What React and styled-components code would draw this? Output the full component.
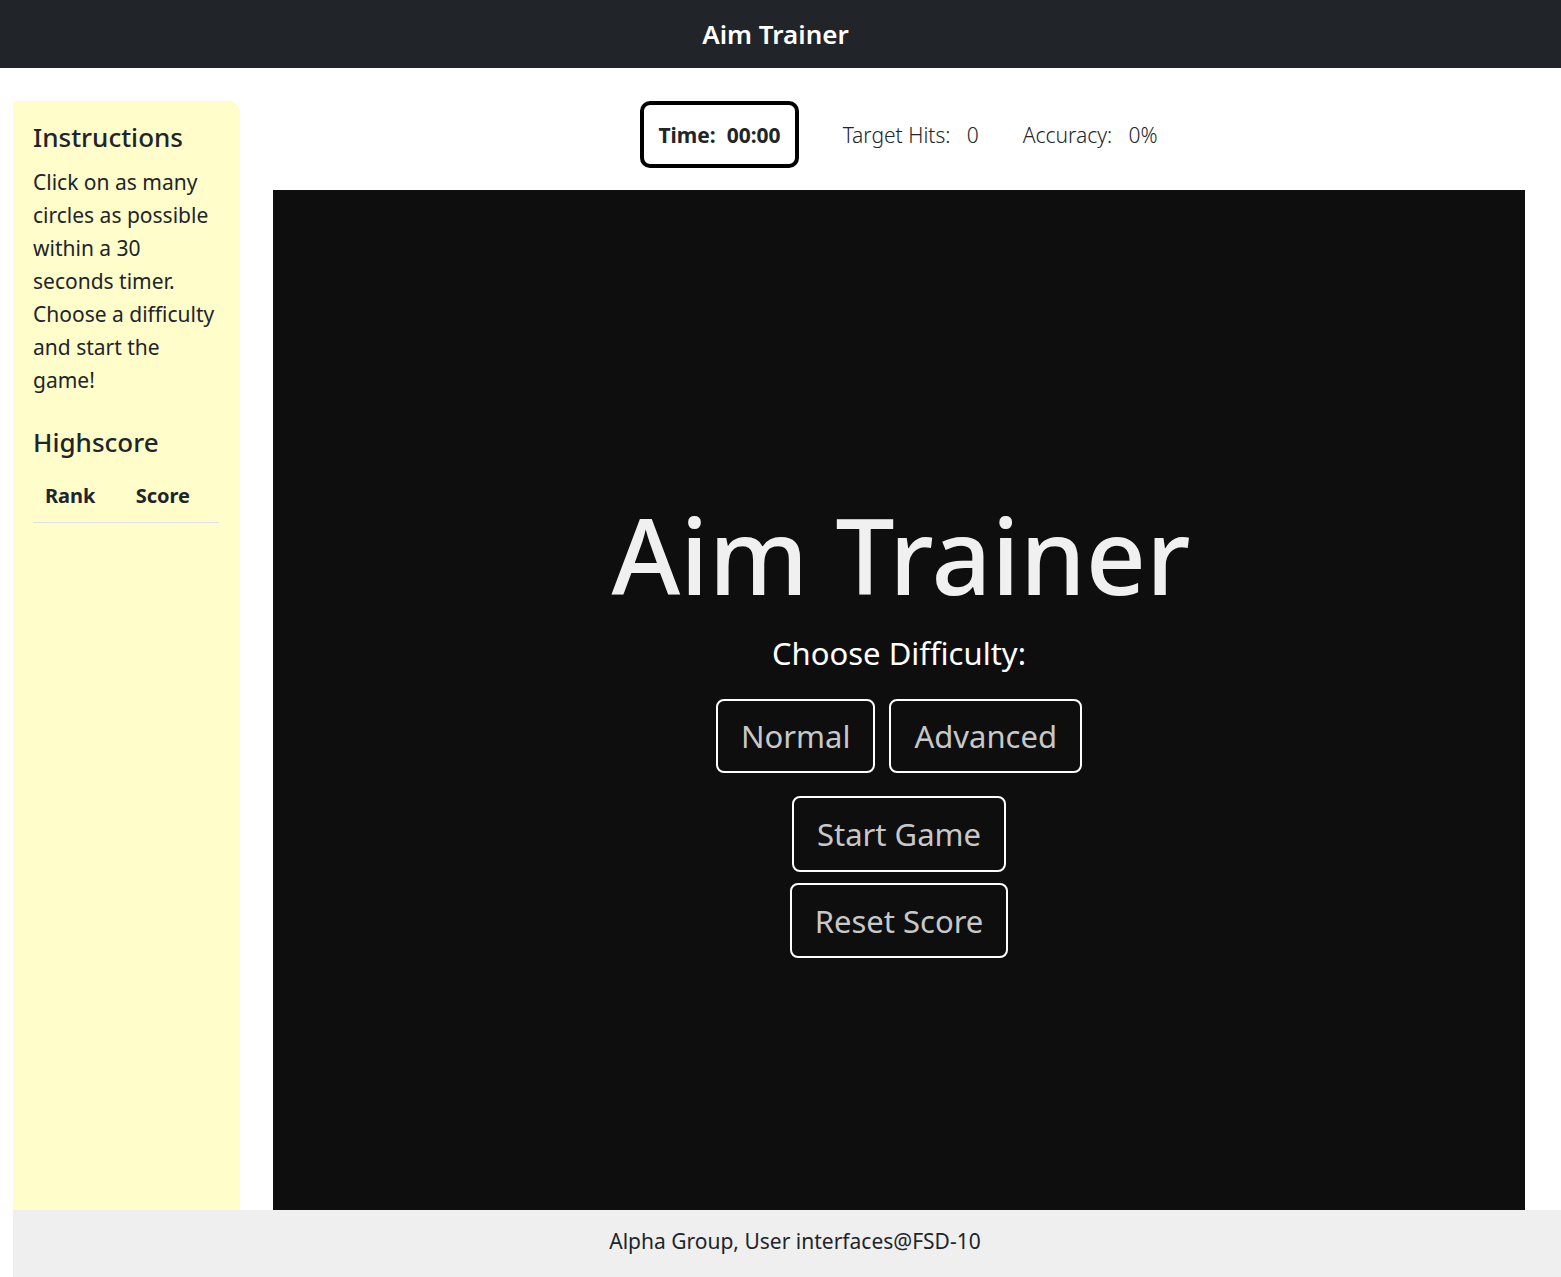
import React from 'react';
import styled, { createGlobalStyle } from 'styled-components';

const GlobalStyle = createGlobalStyle`
  body {
    margin: 0;
    font-family: "Noto Sans", "Open Sans", sans-serif;
    color: #212529;
    background: #fff;
  }
`;

const Navbar = styled.header`
  height: 68px;
  background-color: #212529;
  display: flex;
  align-items: center;
  justify-content: center;
`;

const Brand = styled.span`
  color: #fff;
  font-size: 26px;
  font-weight: 600;
  margin-left: -10px;
`;

const Main = styled.div`
  display: flex;
  padding-top: 33px;
  padding-left: 13px;
`;

const Sidebar = styled.aside`
  width: 227px;
  box-sizing: border-box;
  background-color: #fffdc9;
  border-top-right-radius: 12px;
  padding: 21px 21px 0 20px;
`;

const SideTitle = styled.h3`
  margin: 0 0 ${p => p.mb || 0}px;
  font-size: 26px;
  font-weight: 500;
  line-height: 1.2;
`;

const SideText = styled.p`
  margin: 0 0 30px;
  font-size: 21px;
  line-height: 33px;
  font-weight: 400;
`;

const ScoreTable = styled.table`
  width: 100%;
  border-collapse: collapse;
  margin-top: 16px;
`;

const HeadCell = styled.th`
  font-size: 20px;
  font-weight: 700;
  text-align: left;
  padding: 8px 12px 13px;
  border-bottom: 1px solid #dee2e6;
`;

const GameColumn = styled.section`
  flex: 1;
  display: flex;
  flex-direction: column;
  padding: 0 36px 0 33px;
`;

const StatsBar = styled.div`
  display: flex;
  align-items: center;
  justify-content: center;
  gap: 44px;
  height: 67px;
  margin-bottom: 22px;
`;

const TimeBox = styled.div`
  border: 4px solid #000;
  border-radius: 10px;
  height: 67px;
  box-sizing: border-box;
  padding: 0 14px;
  display: flex;
  align-items: center;
  font-size: 21px;
  font-weight: 700;
  white-space: pre;
`;

const Stat = styled.div`
  font-size: 21px;
  font-weight: 300;
  white-space: pre;
`;

const GameArea = styled.div`
  height: 1020px;
  background-color: #0e0e0e;
  display: flex;
  flex-direction: column;
  align-items: center;
  justify-content: flex-start;
  padding-top: 302px;
  box-sizing: border-box;
`;

const BigTitle = styled.h1`
  margin: 0 0 14px 4px;
  font-size: 105px;
  font-weight: 500;
  color: #f0f0f0;
  line-height: 1.2;
`;

const Subtitle = styled.h2`
  margin: 0 0 25px;
  font-size: 31px;
  font-weight: 400;
  color: #fff;
`;

const ButtonRow = styled.div`
  display: flex;
  gap: 14px;
  margin-bottom: ${p => p.gap || 0}px;
`;

const GameButton = styled.button`
  background: transparent;
  border: 2px solid #fff;
  border-radius: 8px;
  height: ${p => p.h || 75}px;
  padding: 0 ${p => p.px || 23}px;
  color: #c8c8c8;
  font-family: inherit;
  font-size: 31px;
  font-weight: 400;
  cursor: pointer;
`;

const Footer = styled.footer`
  margin-left: 13px;
  padding: 0 0 6px 16px;
  height: 67px;
  box-sizing: border-box;
  background-color: #efefef;
  display: flex;
  align-items: center;
  justify-content: center;
  font-size: 21px;
  font-weight: 400;
`;

export default function App() {
  return (
    <>
      <GlobalStyle />
      <Navbar>
        <Brand>Aim Trainer</Brand>
      </Navbar>
      <Main>
        <Sidebar>
          <SideTitle mb={13}>Instructions</SideTitle>
          <SideText>
            Click on as many circles as possible within a 30 seconds timer. Choose a difficulty and start the game!
          </SideText>
          <SideTitle>Highscore</SideTitle>
          <ScoreTable>
            <thead>
              <tr>
                <HeadCell>Rank</HeadCell>
                <HeadCell>Score</HeadCell>
              </tr>
            </thead>
            <tbody />
          </ScoreTable>
        </Sidebar>
        <GameColumn>
          <StatsBar>
            <TimeBox>Time:  00:00</TimeBox>
            <Stat>Target Hits:   0</Stat>
            <Stat>Accuracy:   0%</Stat>
          </StatsBar>
          <GameArea>
            <BigTitle>Aim Trainer</BigTitle>
            <Subtitle>Choose Difficulty:</Subtitle>
            <ButtonRow gap={23}>
              <GameButton h={74}>Normal</GameButton>
              <GameButton h={74}>Advanced</GameButton>
            </ButtonRow>
            <ButtonRow gap={11}>
              <GameButton h={76}>Start Game</GameButton>
            </ButtonRow>
            <ButtonRow>
              <GameButton>Reset Score</GameButton>
            </ButtonRow>
          </GameArea>
        </GameColumn>
      </Main>
      <Footer>Alpha Group, User interfaces@FSD-10</Footer>
    </>
  );
}
